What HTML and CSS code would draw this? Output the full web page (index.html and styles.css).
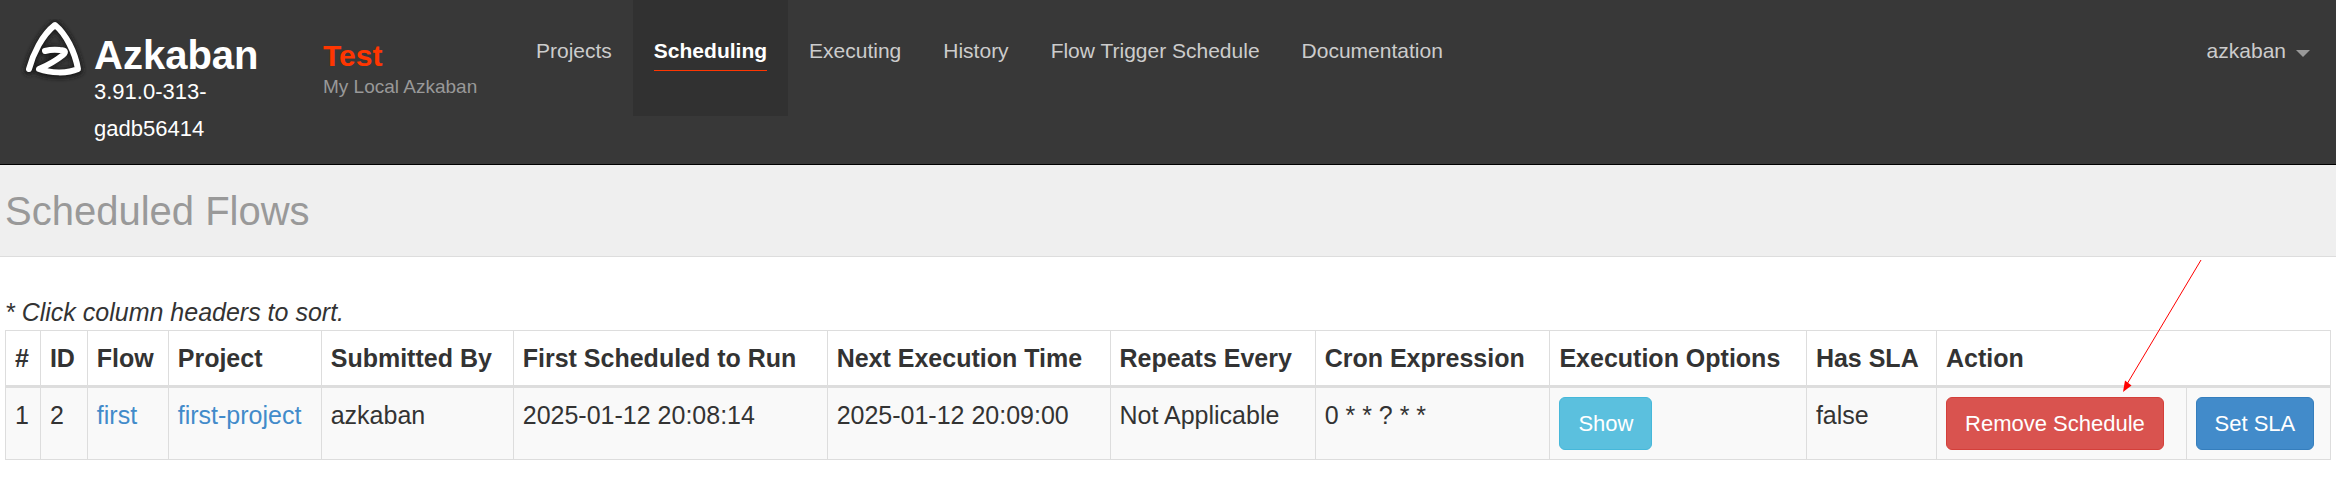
FILE: index.html
```html
<!DOCTYPE html>
<html lang="en">
<head>
<meta charset="utf-8">
<title>Azkaban - Scheduled Flows</title>
<link rel="stylesheet" href="styles.css">
</head>
<body>
<header class="navbar">
  <svg class="logo" viewBox="0 0 70 70" aria-hidden="true">
    <defs><filter id="glow" x="-20%" y="-20%" width="140%" height="140%"><feGaussianBlur stdDeviation="2"/></filter></defs>
    <g fill="none" stroke-linecap="round" stroke-linejoin="round">
      <path d="M9 51C13 36 22 17 35 6C46 15 55 34 58 51C47 56 30 55 19 51L43 35Q35 30 25 32" stroke="#1c1c1c" stroke-width="10" filter="url(#glow)"/>
      <path d="M9 50C13 35 22 16 35 6C46 15 55 33 58 50C47 55 30 54 19 50Q33 44 43 36Q48 31 40 31Q32 30 25 32" stroke="#fff" stroke-width="6"/>
    </g>
  </svg>
  <div class="brand">
    <a class="brand-name" href="#">Azkaban</a>
    <span class="version">3.91.0-313-<br>gadb56414</span>
  </div>
  <div class="instance">
    <strong class="instance-name">Test</strong>
    <span class="instance-label">My Local Azkaban</span>
  </div>
  <nav class="menu">
    <a class="menu-item" href="#">Projects</a>
    <a class="menu-item active" href="#" aria-current="page"><span class="menu-text">Scheduling</span></a>
    <a class="menu-item" href="#">Executing</a>
    <a class="menu-item" href="#">History</a>
    <a class="menu-item" href="#">Flow Trigger Schedule</a>
    <a class="menu-item" href="#">Documentation</a>
  </nav>
  <button class="user" type="button">azkaban<span class="caret"></span></button>
</header>
<div class="page-header"><h1 class="page-title">Scheduled Flows</h1></div>
<main class="content">
  <svg class="arrow" viewBox="0 0 80 134" aria-hidden="true">
    <path d="M79 1L5 125" stroke="#f00" stroke-width="1" fill="none"/>
    <path d="M1 133L3 121.500L9.500 126.500Z" fill="#f00"/>
  </svg>
  <em class="hint">* Click column headers to sort.</em>
  <table class="flows">
    <colgroup>
      <col class="c-num"><col class="c-id"><col class="c-flow"><col class="c-project"><col class="c-user"><col class="c-first"><col class="c-next"><col class="c-repeat"><col class="c-cron"><col class="c-options"><col class="c-has"><col class="c-remove"><col class="c-sla">
    </colgroup>
    <thead>
      <tr>
        <th>#</th><th>ID</th><th>Flow</th><th>Project</th><th>Submitted By</th><th>First Scheduled to Run</th><th>Next Execution Time</th><th>Repeats Every</th><th>Cron Expression</th><th>Execution Options</th><th>Has SLA</th><th colspan="2">Action</th>
      </tr>
    </thead>
    <tbody>
      <tr>
        <td>1</td><td>2</td><td><a href="#">first</a></td><td><a href="#">first-project</a></td><td>azkaban</td><td>2025-01-12 20:08:14</td><td>2025-01-12 20:09:00</td><td>Not Applicable</td><td>0 * * ? * *</td>
        <td><button class="btn btn-info" type="button">Show</button></td>
        <td>false</td>
        <td><button class="btn btn-danger" type="button">Remove Schedule</button></td>
        <td><button class="btn btn-primary" type="button">Set SLA</button></td>
      </tr>
    </tbody>
  </table>
</main>
</body>
</html>
```
FILE: styles.css
```css
* { box-sizing: border-box; }
body {
  margin: 0;
  background: #fff;
  color: #333;
  font-family: "Liberation Sans", Arial, sans-serif;
  font-size: 25px;
  line-height: 34px;
}
a { color: #428bca; text-decoration: none; }
button { font-family: inherit; cursor: pointer; }

.navbar {
  display: flex;
  align-items: flex-start;
  background: #383838;
  border-bottom: 1px solid #000;
}
.logo { width: 70px; height: 70px; margin: 19px 4px 0 20px; }
.brand { display: flex; flex-direction: column; width: 229px; padding: 37px 0 17px; }
.brand-name { color: #fff; font-size: 40px; font-weight: bold; line-height: 36px; }
.version { color: #fff; font-size: 22px; line-height: 37px; }
.instance { display: flex; flex-direction: column; width: 192px; padding-top: 39px; }
.instance-name { color: #ff3601; font-size: 30px; line-height: 34px; }
.instance-label { color: #999; font-size: 19px; line-height: 28px; }
.menu { display: flex; }
.menu-item {
  height: 116px;
  padding: 36px 21px 0;
  color: #ccc;
  font-size: 21px;
  line-height: 30px;
}
.menu-item.active { background: #313131; color: #fff; font-weight: bold; }
.menu-text { display: block; padding-bottom: 4px; border-bottom: 1px solid #ff3601; }
.user {
  display: flex;
  align-items: center;
  margin: 36px 26px 0 auto;
  padding: 0;
  border: 0;
  background: none;
  color: #ccc;
  font-size: 21px;
  line-height: 30px;
}
.caret {
  margin: 4px 0 0 10px;
  border: 7px solid transparent;
  border-top-color: #999;
  border-bottom: 0;
}

.page-header { padding: 23px 5px 21px; background: #efefef; border-bottom: 1px solid #ddd; }
.page-title { margin: 0; color: #999; font-size: 40px; font-weight: normal; line-height: 47px; }

.content { position: relative; padding: 38px 5px 20px; }
.hint { display: block; line-height: 35px; }
.arrow { position: absolute; top: 2px; right: 134px; width: 80px; height: 134px; pointer-events: none; }

.flows { width: 100%; table-layout: fixed; border-collapse: collapse; }
.flows th, .flows td {
  padding: 9px;
  border: 1px solid #ddd;
  text-align: left;
  vertical-align: top;
  white-space: nowrap;
}
.flows th { padding: 10px 9px; border-bottom-width: 3px; }
.flows td { background: #f9f9f9; line-height: 36px; }
.c-num { width: 1.5%; }
.c-id { width: 2.02%; }
.c-flow { width: 3.48%; }
.c-project { width: 6.58%; }
.c-user { width: 8.26%; }
.c-first { width: 13.5%; }
.c-next { width: 12.17%; }
.c-repeat { width: 8.82%; }
.c-cron { width: 10.1%; }
.c-options { width: 11.03%; }
.c-has { width: 5.6%; }
.c-remove { width: 10.73%; }
.c-sla { width: 6.21%; }

.btn {
  display: block;
  padding: 10px 18px;
  border: 1px solid;
  border-radius: 6px;
  color: #fff;
  font-size: 22px;
  line-height: 31px;
  white-space: nowrap;
}
.btn-info { background: #5bc0de; border-color: #46b8da; }
.btn-danger { background: #d9534f; border-color: #d43f3a; }
.btn-primary { background: #428bca; border-color: #357ebd; }
```
